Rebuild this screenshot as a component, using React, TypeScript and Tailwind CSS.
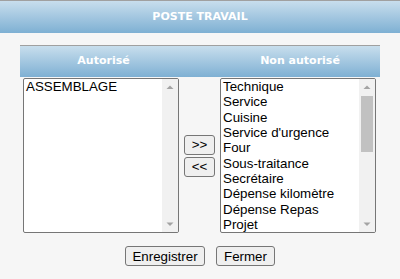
import React from 'react';

const autorises = ['ASSEMBLAGE'];
const nonAutorises = [
    'Technique',
    'Service',
    'Cuisine',
    "Service d'urgence",
    'Four',
    'Sous-traitance',
    'Secrétaire',
    'Dépense kilomètre',
    'Dépense Repas',
    'Projet',
];

const Arrow = ({ up }: { up?: boolean }) => (
    <svg width="16" height="16" viewBox="0 0 16 16" className="shrink-0">
        <path d={up ? 'M4.5 10 L8 6.5 L11.5 10 Z' : 'M4.5 6.5 L8 10 L11.5 6.5 Z'} fill="#a3a3a3" />
    </svg>
);

const ListBox = ({ items, thumb }: { items: string[]; thumb?: boolean }) => (
    <div className="flex h-[155px] w-[156px] overflow-hidden rounded-[2px] border border-[#767676] bg-white">
        <div className="flex-1 overflow-hidden pl-[2px] text-[13.333px] leading-[15.33px] text-black">
            {items.map((item) => (
                <div key={item} className="whitespace-nowrap">{item}</div>
            ))}
        </div>
        {/* Scrollbar */}
        <div className="flex w-[16px] flex-col bg-[#f1f1f1]">
            <Arrow up />
            <div className="flex-1 px-[2px]">
                {thumb && <div className="mt-[1px] h-[56px] w-full bg-[#c1c1c1]" />}
            </div>
            <Arrow />
        </div>
    </div>
);

const Button = ({ children, className = '' }: { children: React.ReactNode; className?: string }) => (
    <button className={`rounded-[3px] border border-[#767676] bg-[#efefef] text-[13.333px] leading-[15px] text-black ${className}`}>
        {children}
    </button>
);

export default function App() {
    return (
        <div className="h-[279px] w-[400px] bg-[#f6f6f6] font-['Liberation_Sans',Arial,sans-serif]">
            {/* Title bar */}
            <div className="border-t border-[#a0a0a0] bg-gradient-to-b from-[#c8deed] to-[#7eb0d3]">
                <div className="flex h-[32px] items-center justify-center font-['DejaVu_Sans',Verdana,sans-serif] text-[11px] font-bold text-white">
                    POSTE TRAVAIL
                </div>
            </div>

            <div className="mx-[20px] mt-[12px] border-t border-[#a0a0a0]">
                {/* Column headers */}
                <div className="flex h-[31px] items-center bg-gradient-to-b from-[#c8deed] to-[#7eb0d3] font-['DejaVu_Sans',Verdana,sans-serif] text-[11px] font-bold text-white">
                    <div className="w-[164px] pl-[3px] text-center">Autorisé</div>
                    <div className="w-[36px]" />
                    <div className="flex-1 text-center">Non autorisé</div>
                </div>

                {/* Lists */}
                <div className="mt-[1px] flex items-center pl-[3px]">
                    <ListBox items={autorises} />
                    <div className="mx-[5px] flex flex-col gap-[2px]">
                        <Button className="h-[20px] w-[31px]">&gt;&gt;</Button>
                        <Button className="h-[20px] w-[31px]">&lt;&lt;</Button>
                    </div>
                    <ListBox items={nonAutorises} thumb />
                </div>
            </div>

            {/* Actions */}
            <div className="mt-[13px] flex justify-center gap-[11px]">
                <Button className="h-[20px] w-[80px]">Enregistrer</Button>
                <Button className="h-[20px] w-[59px]">Fermer</Button>
            </div>
        </div>
    );
}
